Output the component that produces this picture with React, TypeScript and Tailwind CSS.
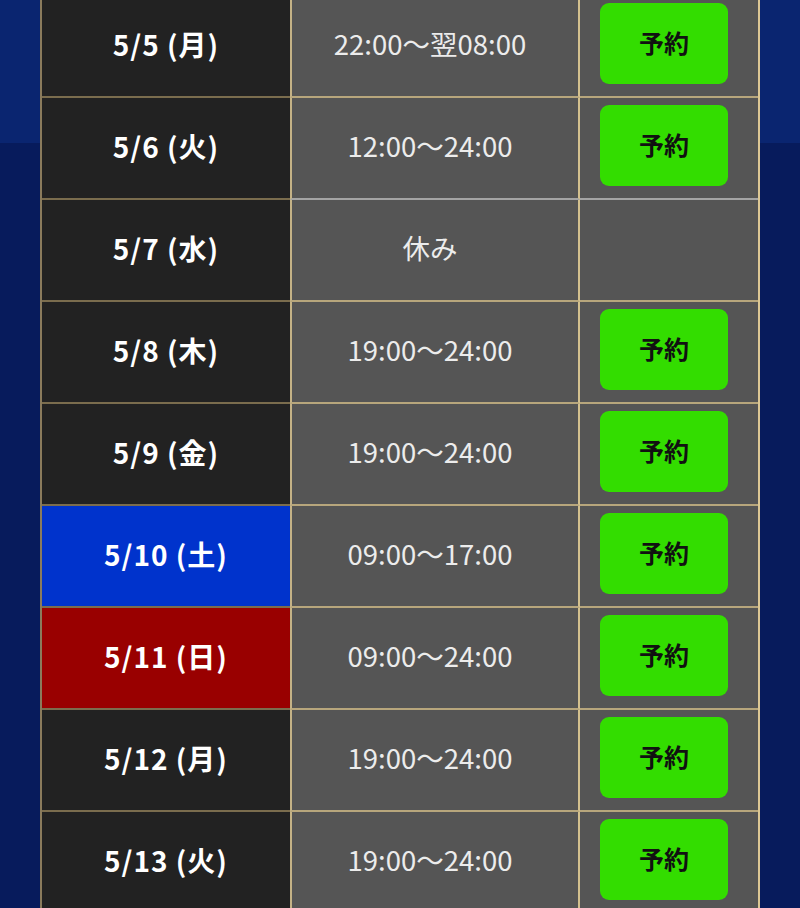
import React from "react";

type Row = { date: string; time: string; kind?: "sat" | "sun"; btn: boolean; grey?: boolean };

const rows: Row[] = [
  { date: "5/5 (月)", time: "22:00〜翌08:00", btn: true },
  { date: "5/6 (火)", time: "12:00〜24:00", btn: true, grey: true },
  { date: "5/7 (水)", time: "休み", btn: false },
  { date: "5/8 (木)", time: "19:00〜24:00", btn: true },
  { date: "5/9 (金)", time: "19:00〜24:00", btn: true },
  { date: "5/10 (土)", time: "09:00〜17:00", btn: true, kind: "sat" },
  { date: "5/11 (日)", time: "09:00〜24:00", btn: true, kind: "sun" },
  { date: "5/12 (月)", time: "19:00〜24:00", btn: true },
  { date: "5/13 (火)", time: "19:00〜24:00", btn: true },
];

const font = { fontFamily: '"Noto Sans CJK JP", "Noto Sans", sans-serif' };

export default function App() {
  return (
    <div
      className="w-[800px] h-[908px] overflow-hidden bg-[linear-gradient(to_bottom,#0a2570_143px,#071b5c_143px)]"
      style={font}
    >
      <div className="ml-[40px] mt-[-4px] w-[720px] border-l-2 border-l-[#8a7b5c] border-r-2 border-r-[#dcc794]">
        {rows.map((r, i) => {
          const dateBg =
            r.kind === "sat" ? "bg-[#0033cc]" : r.kind === "sun" ? "bg-[#990000]" : "bg-[#222222]";
          const midBorder = r.grey ? "border-b-[#a4a4a4]" : "border-b-[#b7a67c]";
          return (
            <div key={i} className="flex h-[102px]">
              <div
                className={`w-[248px] ${dateBg} border-b-2 border-b-[#7b6d4e] flex items-center justify-center pb-[4px] text-white font-bold text-[28px] tracking-[1px] leading-none`}
              >
                {r.date}
              </div>
              <div
                className={`w-[290px] bg-[#555555] border-l-2 border-l-[#c4b286] border-r-2 border-r-[#d3c08e] border-b-2 ${midBorder} flex items-center justify-center pb-[4px] pr-[10px] text-[#ececec] text-[27.5px] leading-none`}
              >
                {r.time}
              </div>
              <div className={`w-[178px] bg-[#555555] border-b-2 ${midBorder} flex items-start`}>
                {r.btn && (
                  <div className="ml-[20px] mt-[7px] w-[128px] h-[81px] rounded-[9px] bg-[#33dd00] flex items-center justify-center pb-[2px] text-[#111111] font-bold text-[25px] leading-none">
                    予約
                  </div>
                )}
              </div>
            </div>
          );
        })}
      </div>
    </div>
  );
}
